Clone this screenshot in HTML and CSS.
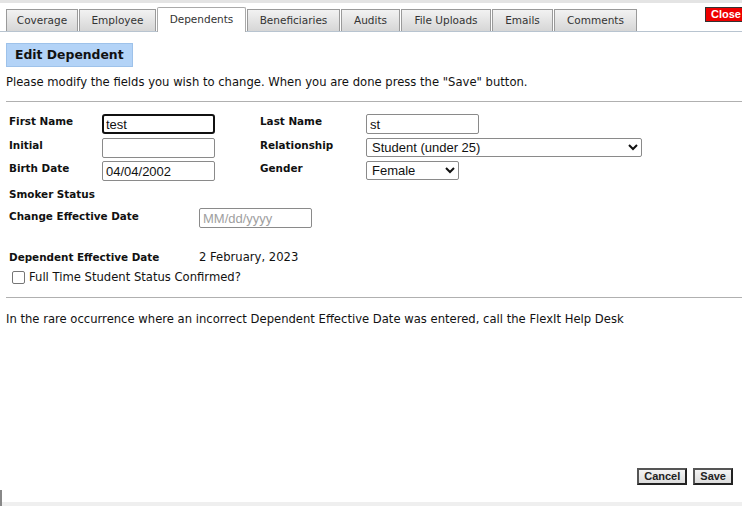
FILE: index.html
```html
<!DOCTYPE html>
<html>
<head>
<meta charset="utf-8">
<link rel="stylesheet" href="styles.css">
</head>
<body>
<div class="page">
  <div class="topstrip"></div>
  <div class="tabbar">
    <div class="tabs">
      <div class="tab w72">Coverage</div>
      <div class="tab w77">Employee</div>
      <div class="tab active w89">Dependents</div>
      <div class="tab w93">Beneficiaries</div>
      <div class="tab w59">Audits</div>
      <div class="tab w90">File Uploads</div>
      <div class="tab w61">Emails</div>
      <div class="tab w83">Comments</div>
    </div>
    <div class="close">Close</div>
  </div>
  <div class="content">
    <div class="heading">Edit Dependent</div>
    <p class="intro">Please modify the fields you wish to change. When you are done press the "Save" button.</p>
    <hr class="rule">
    <div class="form">
      <div class="lbl">First Name</div>
      <div class="fld"><input class="txt focus" type="text" value="test"></div>
      <div class="lbl">Last Name</div>
      <div class="fld"><input class="txt" type="text" value="st"></div>

      <div class="lbl">Initial</div>
      <div class="fld"><input class="txt" type="text" value=""></div>
      <div class="lbl">Relationship</div>
      <div class="fld"><select class="sel wide"><option>Student (under 25)</option></select></div>

      <div class="lbl">Birth Date</div>
      <div class="fld"><input class="txt" type="text" value="04/04/2002"></div>
      <div class="lbl">Gender</div>
      <div class="fld"><select class="sel narrow"><option>Female</option></select></div>
    </div>
    <div class="lbl smoker">Smoker Status</div>
    <div class="row2">
      <div class="lbl">Change Effective Date</div>
      <input class="txt ph" type="text" placeholder="MM/dd/yyyy">
    </div>
    <div class="row2 depdate">
      <div class="lbl">Dependent Effective Date</div>
      <div class="val">2 February, 2023</div>
    </div>
    <label class="check"><span class="box"></span>Full Time Student Status Confirmed?</label>
    <hr class="rule rule2">
    <p class="note">In the rare occurrence where an incorrect Dependent Effective Date was entered, call the FlexIt Help Desk</p>
  </div>
  <div class="actions">
    <button class="btn">Cancel</button>
    <button class="btn">Save</button>
  </div>
  <div class="bottom"><div class="mark"></div></div>
</div>
</body>
</html>
```

FILE: styles.css
```css
* { box-sizing: border-box; }
html, body { margin: 0; padding: 0; background: #fff; }
body {
  font-family: "DejaVu Sans", Verdana, sans-serif;
  font-size: 11.6px;
  color: #111;
  width: 742px;
  height: 506px;
  overflow: hidden;
}
.page { position: relative; height: 506px; display: flex; flex-direction: column; }
.topstrip { height: 3px; background: #e4e4e4; }
.tabbar {
  display: flex;
  justify-content: space-between;
  align-items: flex-start;
  padding-left: 6px;
  height: 25px;
  border-bottom: 1px solid #b8c4d0;
  margin-top: 4px;
}
.tabs { display: flex; align-items: flex-end; height: 24px; }
.tab {
  height: 22px;
  line-height: 20px;
  text-align: center;
  margin-right: 1px;
  border: 1px solid #9a9a9a;
  border-bottom: none;
  background: linear-gradient(#f2f2f2, #d6d6d6);
  color: #333;
  font-size: 10.5px;
  white-space: nowrap;
}
.w72 { width: 72px; }
.w77 { width: 77px; }
.w89 { width: 89px; }
.w93 { width: 93px; }
.w59 { width: 59px; }
.w90 { width: 90px; }
.w61 { width: 61px; }
.w83 { width: 83px; }
.tab.active {
  height: 25px;
  line-height: 23px;
  background: #fff;
  border-color: #aaa;
  border-radius: 2px 2px 0 0;
  margin-bottom: -1px;
}
.close {
  background: #ee0000;
  color: #fff;
  font-family: "Liberation Sans", Arial, sans-serif;
  font-weight: bold;
  font-size: 11px;
  height: 15px;
  line-height: 13px;
  padding: 0 0 0 5px;
  border: 1px solid #333;
  border-right: none;
  width: 37px;
  white-space: nowrap;
  overflow: hidden;
}
.content { padding-left: 6px; }
.heading {
  display: inline-block;
  margin-top: 11px;
  height: 24px;
  line-height: 22px;
  padding: 0 8px;
  background: #b3d3f7;
  border: 1px solid #9ec2ea;
  font-weight: bold;
  font-size: 12.4px;
  color: #111;
  white-space: nowrap;
}
.intro { margin: 8px 0 0 0; line-height: 15px; }
.rule { border: none; border-top: 1px solid #b0b0b0; margin: 11px 0 0 0; height: 0; }
.form {
  display: grid;
  grid-template-columns: 93px 158px 106px auto;
  grid-template-rows: 24px 23px 24px;
  margin-top: 12px;
  padding-left: 3px;
}
.lbl { font-weight: bold; font-size: 10.4px; line-height: 15px; color: #111; white-space: nowrap; }
.fld { display: flex; align-items: flex-start; }
.txt {
  width: 113px;
  height: 20px;
  border: 1px solid #8a8a8a;
  border-radius: 2px;
  font-family: "Liberation Sans", Arial, sans-serif;
  font-size: 13px;
  padding: 1px 3px;
  margin: 0;
  color: #111;
  background: #fff;
  outline: none;
}
.txt.focus { border: 2px solid #111; border-radius: 3px; padding: 0 2px; }
.sel {
  height: 19px;
  border: 1px solid #8a8a8a;
  border-radius: 2px;
  font-family: "Liberation Sans", Arial, sans-serif;
  font-size: 13px;
  color: #111;
  background: #fff;
  padding: 0 1px;
}
.sel.wide { width: 276px; }
.sel.narrow { width: 93px; }
.smoker { padding-left: 3px; margin-top: 2px; height: 16px; }
.row2 { display: flex; align-items: flex-start; padding-left: 3px; margin-top: 5px; }
.row2 .lbl { width: 190px; padding-top: 1px; }
.ph::placeholder { color: #a0a0a0; }
.depdate { margin-top: 22px; }
.depdate .lbl { padding-top: 0; }
.val { line-height: 15px; }
.check {
  display: flex;
  align-items: center;
  margin-top: 5px;
  padding-left: 6px;
  line-height: 15px;
}
.box {
  width: 13px; height: 13px;
  border: 1px solid #767676;
  border-radius: 2px;
  margin-right: 4px;
  background: #fff;
}
.rule2 { margin-top: 12px; }
.note { margin: 14px 0 0 0; line-height: 15px; }
.actions {
  margin-top: auto;
  display: flex;
  justify-content: flex-end;
  gap: 6px;
  padding-right: 9px;
  margin-bottom: 17px;
}
.btn {
  height: 17px;
  padding: 0 5px;
  font-family: "Liberation Sans", Arial, sans-serif;
  font-weight: bold;
  font-size: 11px;
  line-height: 13px;
  color: #222;
  background: linear-gradient(#f4f4f4, #dcdcdc);
  border: 2px solid #333;
  border-color: #555 #222 #222 #555;
}
.bottom { height: 4px; background: #efefef; position: relative; }
.mark { position: absolute; left: 0; bottom: 0; width: 2px; height: 16px; background: #888; }
```
